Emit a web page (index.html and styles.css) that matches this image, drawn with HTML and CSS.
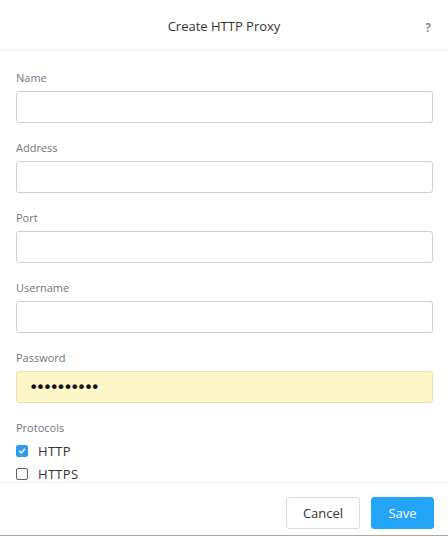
FILE: index.html
```html
<!DOCTYPE html>
<html>
<head>
<meta charset="utf-8">
<link rel="stylesheet" href="styles.css">
</head>
<body>
<div class="modal">
  <header class="modal-header">
    <h1 class="title">Create HTTP Proxy</h1>
    <span class="help">?</span>
  </header>
  <form class="modal-body">
    <div class="field">
      <label class="label">Name</label>
      <input class="input" type="text">
    </div>
    <div class="field">
      <label class="label">Address</label>
      <input class="input" type="text">
    </div>
    <div class="field">
      <label class="label">Port</label>
      <input class="input" type="text">
    </div>
    <div class="field">
      <label class="label">Username</label>
      <input class="input" type="text">
    </div>
    <div class="field">
      <label class="label">Password</label>
      <input class="input input-autofill" type="password" value="0123456789">
    </div>
    <div class="field protocols">
      <label class="label">Protocols</label>
      <div class="check-row">
        <span class="check checked">
          <svg viewBox="0 0 12 12" width="12" height="12"><path d="M3 6.2 L5.1 8.3 L9 3.9" fill="none" stroke="#fff" stroke-width="1.7" stroke-linecap="round" stroke-linejoin="round"/></svg>
        </span>
        <span class="check-label">HTTP</span>
      </div>
      <div class="check-row">
        <span class="check"></span>
        <span class="check-label">HTTPS</span>
      </div>
    </div>
  </form>
  <footer class="modal-footer">
    <button class="btn btn-default" type="button">Cancel</button>
    <button class="btn btn-primary" type="button">Save</button>
  </footer>
</div>
</body>
</html>
```
FILE: styles.css
```css
* { box-sizing: border-box; }
html, body { margin: 0; padding: 0; background: #fff; }
body {
  font-family: "Open Sans", "Liberation Sans", sans-serif;
  color: #333;
  width: 448px;
  height: 537px;
  overflow: hidden;
}
.modal {
  width: 448px;
  height: 536px;
  display: flex;
  flex-direction: column;
  border-bottom: 1px solid #a9a9a9;
}
.modal-header {
  flex: 0 0 50px;
  height: 50px;
  border-bottom: 1px solid #f0f0f0;
  display: flex;
  align-items: center;
  justify-content: center;
  position: relative;
}
.title {
  margin: 0;
  font-size: 13px;
  font-weight: 500;
  color: #333;
  padding-top: 2px;
}
.help {
  position: absolute;
  right: 17px;
  top: 19px;
  font-size: 12px;
  font-weight: 700;
  color: #8a9199;
}
.modal-body {
  margin: 0;
  padding: 20px 15px 0 16px;
  flex: 1 1 auto;
  min-height: 0;
  overflow: hidden;
}
.field {
  display: flex;
  flex-direction: column;
  margin-bottom: 17px;
}
.label {
  font-size: 11px;
  line-height: 15px;
  color: #6f7680;
  margin-bottom: 6px;
}
.input {
  height: 32px;
  width: 100%;
  border: 1px solid #cdd0d4;
  border-radius: 3px;
  background: #fff;
  padding: 0 13px;
  font-family: inherit;
  font-size: 13px;
  outline: none;
}
.input-autofill {
  background: #fdf6c9;
  border-color: #e8e0ae;
  color: #111;
  font-family: "DejaVu Sans", sans-serif;
  font-size: 16px;
  letter-spacing: -2.6px;
  padding-left: 12px;
}
.protocols .label { margin-bottom: 8px; }
.check-row {
  display: flex;
  align-items: center;
  height: 16px;
  margin-bottom: 7px;
}
.check {
  width: 12px;
  height: 12px;
  border: 1px solid #5c6066;
  border-radius: 2px;
  margin-right: 10px;
  display: flex;
  align-items: center;
  justify-content: center;
}
.check.checked {
  background: #2c9bf0;
  border-color: #2c9bf0;
}
.check svg { display: block; }
.check-label {
  font-size: 13px;
  color: #333;
  letter-spacing: 0.3px;
}
.modal-footer {
  flex: 0 0 53px;
  height: 53px;
  border-top: 1px solid #f0f0f0;
  display: flex;
  justify-content: flex-end;
  align-items: flex-start;
  gap: 11px;
  padding: 14px 14px 0 0;
}
.btn {
  height: 32px;
  border-radius: 3px;
  font-family: inherit;
  font-size: 13px;
  cursor: pointer;
}
.btn-default {
  width: 74px;
  background: #fff;
  border: 1px solid #d9dcdf;
  color: #333;
}
.btn-primary {
  width: 63px;
  background: #22a5f7;
  border: 1px solid #22a5f7;
  color: #fff;
}
```
